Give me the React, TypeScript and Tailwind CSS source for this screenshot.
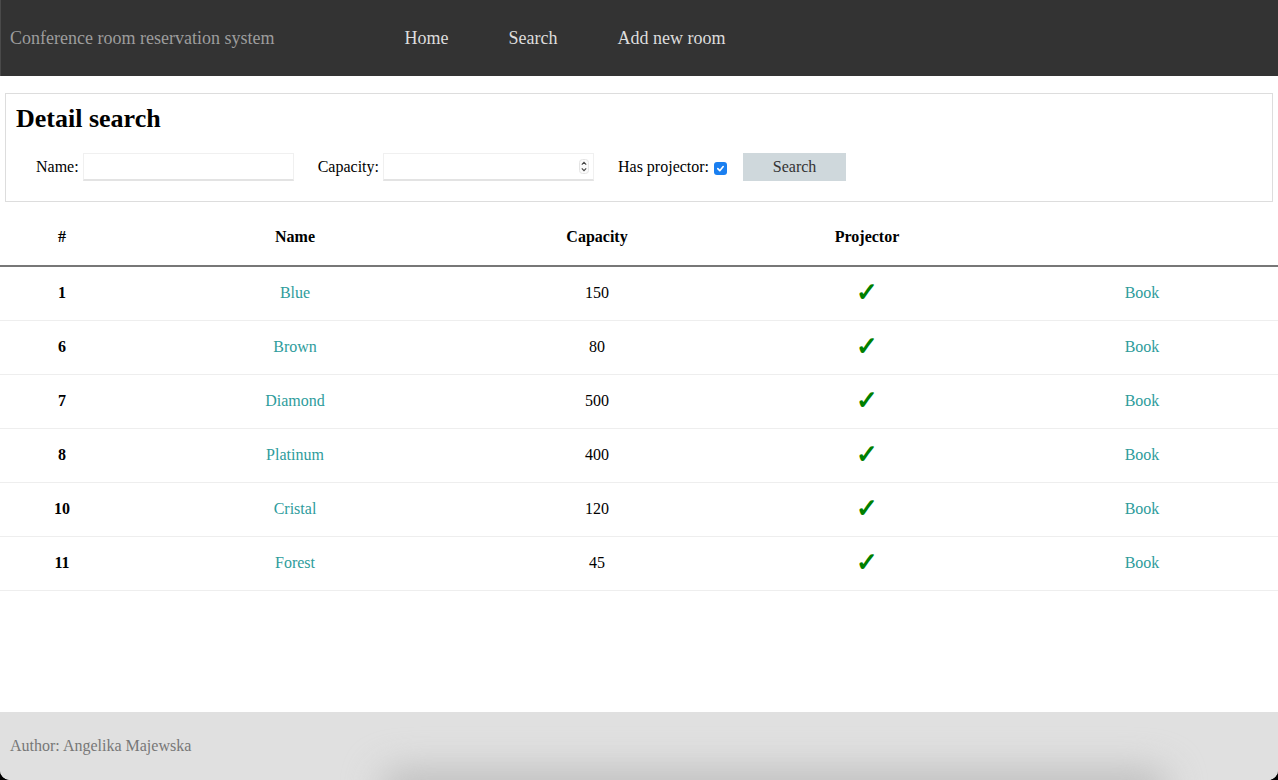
import { useState } from 'react';

interface Room {
  id: number;
  name: string;
  capacity: number;
  projector: boolean;
}

const rooms: Room[] = [
  { id: 1, name: 'Blue', capacity: 150, projector: true },
  { id: 6, name: 'Brown', capacity: 80, projector: true },
  { id: 7, name: 'Diamond', capacity: 500, projector: true },
  { id: 8, name: 'Platinum', capacity: 400, projector: true },
  { id: 10, name: 'Cristal', capacity: 120, projector: true },
  { id: 11, name: 'Forest', capacity: 45, projector: true },
];

function NavBar() {
  return (
    <nav className="h-[76px] bg-[#333333] border-l border-[#4a4a4a] flex items-center">
      <span className="pl-[9px] text-[18px] text-[#9d9d9d]">Conference room reservation system</span>
      <div className="flex items-center ml-[130px] gap-[60px] text-[18px] text-[#dddddd]">
        <a href="#">Home</a>
        <a href="#">Search</a>
        <a href="#">Add new room</a>
      </div>
    </nav>
  );
}

function SearchPanel() {
  const [name, setName] = useState('');
  const [capacity, setCapacity] = useState('');
  const [projector, setProjector] = useState(true);

  return (
    <div className="mx-[5px] mt-[17px] border border-[#dddddd] px-[10px] pt-[9px] pb-[20px]">
      <h2 className="text-[26px] font-bold leading-[32px]">Detail search</h2>
      <div className="flex items-center mt-[18px] pl-[20px] text-[16px]">
        <label className="mr-[4px]">Name:</label>
        <input
          value={name}
          onChange={(e) => setName(e.target.value)}
          className="w-[211px] h-[28px] border border-[#f0f0f0] border-b-2 border-b-[#e3e3e3] outline-none px-1"
        />
        <label className="ml-[24px] mr-[4px]">Capacity:</label>
        <div className="relative w-[211px] h-[28px] border border-[#f0f0f0] border-b-2 border-b-[#e3e3e3]">
          <input
            value={capacity}
            onChange={(e) => setCapacity(e.target.value)}
            className="w-full h-full outline-none px-1"
          />
          <svg className="absolute right-[4px] top-[5px]" width="10" height="15" viewBox="0 0 10 15">
            <rect x="0.5" y="0.5" width="9" height="14" rx="3" fill="#fafafa" stroke="#e4e4e4" />
            <path d="M2.8 5.6 L5 3.4 L7.2 5.6" fill="none" stroke="#444" strokeWidth="1.1" />
            <path d="M2.8 9.4 L5 11.6 L7.2 9.4" fill="none" stroke="#444" strokeWidth="1.1" />
          </svg>
        </div>
        <label className="ml-[24px] mr-[5px]">Has projector:</label>
        <button
          onClick={() => setProjector(!projector)}
          className={`w-[13px] h-[13px] mt-[2px] rounded-[3px] flex items-center justify-center ${projector ? 'bg-[#1a7ff0]' : 'bg-white border border-gray-400'}`}
        >
          {projector && (
            <svg width="9" height="9" viewBox="0 0 10 10">
              <path d="M2 5.2 L4.2 7.4 L8 2.8" fill="none" stroke="white" strokeWidth="1.8" strokeLinecap="round" strokeLinejoin="round" />
            </svg>
          )}
        </button>
        <button className="ml-[16px] w-[103px] h-[28px] bg-[#cfd8dc] text-[#333333] text-[16px]">Search</button>
      </div>
    </div>
  );
}

function RoomsTable() {
  return (
    <table className="w-full mt-[8px] border-collapse text-[16px]">
      <colgroup>
        <col className="w-[124px]" />
        <col className="w-[342px]" />
        <col className="w-[262px]" />
        <col className="w-[278px]" />
        <col />
      </colgroup>
      <thead>
        <tr className="h-[56px] border-b-2 border-[#777777]">
          <th className="text-center font-bold pb-[2px]">#</th>
          <th className="text-center font-bold pb-[2px]">Name</th>
          <th className="text-center font-bold pb-[2px]">Capacity</th>
          <th className="text-center font-bold pb-[2px]">Projector</th>
          <th></th>
        </tr>
      </thead>
      <tbody>
        {rooms.map((room) => (
          <tr key={room.id} className="h-[54px] border-b border-[#eeeeee]">
            <td className="text-center font-bold">{room.id}</td>
            <td className="text-center">
              <a href="#" className="text-[#2e9c9c]">{room.name}</a>
            </td>
            <td className="text-center">{room.capacity}</td>
            <td className="text-center text-[#008000] text-[26px] leading-none font-bold">
              {room.projector ? '✓' : '✗'}
            </td>
            <td className="text-center">
              <a href="#" className="text-[#2e9c9c]">Book</a>
            </td>
          </tr>
        ))}
      </tbody>
    </table>
  );
}

export default function App() {
  return (
    <div className="bg-black h-[780px]" style={{ fontFamily: '"Liberation Serif", "Times New Roman", serif' }}>
      <div className="h-full bg-white rounded-b-[10px] overflow-hidden flex flex-col text-black">
        <NavBar />
        <SearchPanel />
        <RoomsTable />
        {/* Footer */}
        <footer className="mt-auto h-[68px] bg-[#e0e0e0] relative flex items-center overflow-hidden">
          <span className="pl-[10px] text-[16px] text-[#777777] relative z-10">Author: Angelika Majewska</span>
          <div className="absolute left-[380px] right-[110px] bottom-[-30px] h-[40px] bg-[#bdbdbd] rounded-full blur-[18px]" />
        </footer>
      </div>
    </div>
  );
}
